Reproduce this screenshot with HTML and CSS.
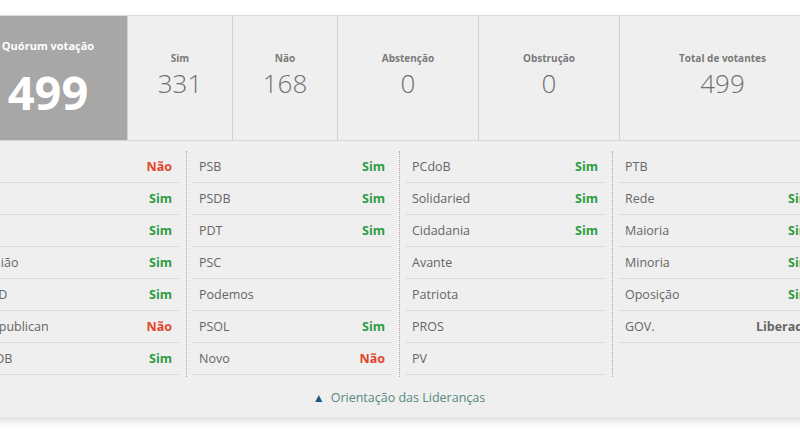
FILE: index.html
```html
<!DOCTYPE html>
<html lang="pt-BR">
<head>
<meta charset="utf-8">
<title>Votação</title>
<link rel="stylesheet" href="styles.css">
</head>
<body>
<div class="panel">
  <div class="stats">
    <div class="quorum">
      <div class="q-title">Quórum votação</div>
      <div class="q-num">499</div>
    </div>
    <div class="stat w-sm"><div class="s-label">Sim</div><div class="s-num">331</div></div>
    <div class="stat w-sm"><div class="s-label">Não</div><div class="s-num">168</div></div>
    <div class="stat w-md"><div class="s-label">Abstenção</div><div class="s-num">0</div></div>
    <div class="stat w-md"><div class="s-label">Obstrução</div><div class="s-num">0</div></div>
    <div class="stat w-lg"><div class="s-label">Total de votantes</div><div class="s-num">499</div></div>
  </div>
  <div class="lists">
    <ul class="col first">
      <li><span class="party">PL</span><span class="vote no">Não</span></li>
      <li><span class="party">PP</span><span class="vote yes">Sim</span></li>
      <li><span class="party">PT</span><span class="vote yes">Sim</span></li>
      <li><span class="party">União</span><span class="vote yes">Sim</span></li>
      <li><span class="party">PSD</span><span class="vote yes">Sim</span></li>
      <li><span class="party">Republican</span><span class="vote no">Não</span></li>
      <li><span class="party">MDB</span><span class="vote yes">Sim</span></li>
    </ul>
    <ul class="col">
      <li><span class="party">PSB</span><span class="vote yes">Sim</span></li>
      <li><span class="party">PSDB</span><span class="vote yes">Sim</span></li>
      <li><span class="party">PDT</span><span class="vote yes">Sim</span></li>
      <li><span class="party">PSC</span><span class="vote"></span></li>
      <li><span class="party">Podemos</span><span class="vote"></span></li>
      <li><span class="party">PSOL</span><span class="vote yes">Sim</span></li>
      <li><span class="party">Novo</span><span class="vote no">Não</span></li>
    </ul>
    <ul class="col">
      <li><span class="party">PCdoB</span><span class="vote yes">Sim</span></li>
      <li><span class="party">Solidaried</span><span class="vote yes">Sim</span></li>
      <li><span class="party">Cidadania</span><span class="vote yes">Sim</span></li>
      <li><span class="party">Avante</span><span class="vote"></span></li>
      <li><span class="party">Patriota</span><span class="vote"></span></li>
      <li><span class="party">PROS</span><span class="vote"></span></li>
      <li><span class="party">PV</span><span class="vote"></span></li>
    </ul>
    <ul class="col">
      <li><span class="party">PTB</span><span class="vote"></span></li>
      <li><span class="party">Rede</span><span class="vote yes">Sim</span></li>
      <li><span class="party">Maioria</span><span class="vote yes">Sim</span></li>
      <li><span class="party">Minoria</span><span class="vote yes">Sim</span></li>
      <li><span class="party">Oposição</span><span class="vote yes">Sim</span></li>
      <li><span class="party">GOV.</span><span class="vote free">Liberado</span></li>
    </ul>
  </div>
  <div class="footer">
    <span class="tri">▲</span>Orientação das Lideranças
  </div>
</div>
</body>
</html>
```
FILE: styles.css
```css
html, body {
  margin: 0;
  padding: 0;
  background: #ffffff;
  overflow: hidden;
  width: 800px;
  height: 445px;
  font-family: "Open Sans", "Liberation Sans", sans-serif;
}

.panel {
  margin: 15px 0 0 -27px;
  width: 852px;
  background: #efefef;
  border-top: 1px solid #dedede;
  box-shadow: 0 4px 8px rgba(0, 0, 0, 0.14);
}

.stats {
  display: flex;
  height: 124px;
  border-bottom: 1px solid #d6d6d6;
}

.quorum {
  width: 154px;
  background: #a7a7a7;
  color: #ffffff;
  text-align: center;
  display: flex;
  flex-direction: column;
  align-items: center;
  padding: 22px 4px 0 0;
  box-sizing: border-box;
}

.q-title {
  font-size: 11px;
  font-weight: 700;
  line-height: 16px;
}

.q-num {
  font-size: 47px;
  font-weight: 700;
  line-height: 56px;
  margin-top: 10px;
}

.stat {
  border-left: 1px solid #d2d2d2;
  text-align: center;
  display: flex;
  flex-direction: column;
  align-items: center;
  padding-top: 35px;
  box-sizing: border-box;
  color: #777777;
}

.w-sm { width: 105px; }
.w-md { width: 141px; }
.w-lg { flex: 1; }

.s-label {
  font-size: 10px;
  font-weight: 700;
  line-height: 14px;
  color: #7a7a7a;
}

.s-num {
  font-size: 26px;
  font-weight: 300;
  line-height: 36px;
  margin-top: 0;
  color: #707070;
}

.lists {
  display: flex;
  padding-top: 10px;
}

.col {
  list-style: none;
  margin: 0;
  padding: 0 7px 2px 6px;
  width: 213px;
  box-sizing: border-box;
  border-left: 1px dotted #aaaaaa;
}

.col.first li {
  padding-left: 4px;
}

.col li {
  display: flex;
  justify-content: space-between;
  align-items: center;
  height: 31px;
  border-bottom: 1px solid #d9d9d9;
  padding: 0 7px 0 6px;
  font-size: 12.5px;
  color: #666666;
}

.party {
  white-space: nowrap;
}

.vote {
  font-weight: 700;
}

.yes { color: #2e9c43; }
.no { color: #e2452b; }
.free { color: #666666; }

.footer {
  height: 40px;
  display: flex;
  align-items: center;
  justify-content: center;
  font-size: 12.5px;
  color: #568a80;
  box-sizing: border-box;
}

.tri {
  color: #1c5a7a;
  font-size: 12px;
  margin-right: 6px;
}
```
